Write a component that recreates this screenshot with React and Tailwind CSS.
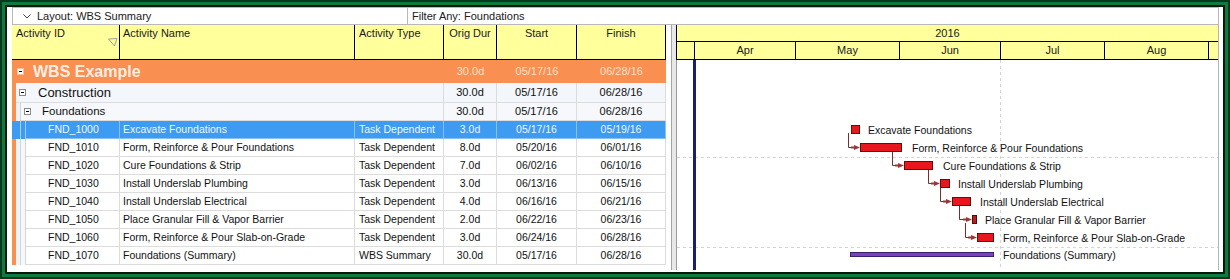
import React from 'react';

const tasks = [
  ['FND_1000', 'Excavate Foundations', 'Task Dependent', '3.0d', '05/17/16', '05/19/16', true],
  ['FND_1010', 'Form, Reinforce & Pour Foundations', 'Task Dependent', '8.0d', '05/20/16', '06/01/16'],
  ['FND_1020', 'Cure Foundations & Strip', 'Task Dependent', '7.0d', '06/02/16', '06/10/16'],
  ['FND_1030', 'Install Underslab Plumbing', 'Task Dependent', '3.0d', '06/13/16', '06/15/16'],
  ['FND_1040', 'Install Underslab Electrical', 'Task Dependent', '4.0d', '06/16/16', '06/21/16'],
  ['FND_1050', 'Place Granular Fill & Vapor Barrier', 'Task Dependent', '2.0d', '06/22/16', '06/23/16'],
  ['FND_1060', 'Form, Reinforce & Pour Slab-on-Grade', 'Task Dependent', '3.0d', '06/24/16', '06/28/16'],
  ['FND_1070', 'Foundations (Summary)', 'WBS Summary', '30.0d', '05/17/16', '06/28/16'],
];

const bars = [
  { x1: 851, x2: 859, y: 125, lx: 868, label: 'Excavate Foundations' },
  { x1: 860, x2: 901, y: 143, lx: 912, label: 'Form, Reinforce & Pour Foundations' },
  { x1: 904, x2: 932, y: 161, lx: 943, label: 'Cure Foundations & Strip' },
  { x1: 940, x2: 949, y: 179, lx: 958, label: 'Install Underslab Plumbing' },
  { x1: 952, x2: 970, y: 197, lx: 980, label: 'Install Underslab Electrical' },
  { x1: 972, x2: 976, y: 215, lx: 985, label: 'Place Granular Fill & Vapor Barrier', dark: true },
  { x1: 977, x2: 993, y: 233, lx: 1003, label: 'Form, Reinforce & Pour Slab-on-Grade' },
];

const links = [
  { vx: 848, y1: 133, y2: 147, x2: 860 },
  { vx: 892, y1: 151, y2: 165, x2: 904 },
  { vx: 928, y1: 169, y2: 183, x2: 940 },
  { vx: 940, y1: 187, y2: 201, x2: 952 },
  { vx: 959, y1: 205, y2: 219, x2: 972 },
  { vx: 965, y1: 223, y2: 237, x2: 977 },
];

function MinusBox({ className = '' }) {
  return (
    <span className={`flex h-[7px] w-[7px] shrink-0 items-center justify-center border border-[#8a8a8a] bg-white ${className}`}>
      <span className="h-px w-[3px] bg-black" />
    </span>
  );
}

function Toolbar() {
  return (
    <div className="flex h-[18px] border border-[#b8b8b8] bg-white text-[11px] text-[#202020]">
      <div className="flex w-[394px] items-center pl-[10px]">
        <svg width="8" height="5" viewBox="0 0 8 5" className="mr-[6px]">
          <polyline points="0.5,0.5 4,4 7.5,0.5" fill="none" stroke="#404040" strokeWidth="1" />
        </svg>
        <span>Layout: WBS Summary</span>
      </div>
      <div className="flex flex-1 items-center border-l border-[#b8b8b8] pl-[4px]">Filter Any: Foundations</div>
    </div>
  );
}

function TableHeader() {
  const c = 'border-r border-black pt-0';
  return (
    <div className="flex h-[35px] border-b border-black bg-[#ffff9b] text-[11px] text-[#1a1a1a]">
      <div className={`relative w-[108px] pl-[4px] ${c}`}>
        Activity ID
        <svg width="10" height="9" viewBox="0 0 10 9" className="absolute left-[96px] top-[13px]">
          <polygon points="0.5,1 9,0.5 6.5,8" fill="none" stroke="#a0a0a0" strokeWidth="1" />
        </svg>
      </div>
      <div className={`w-[235px] pl-[3px] ${c}`}>Activity Name</div>
      <div className={`w-[89px] pl-[4px] ${c}`}>Activity Type</div>
      <div className={`w-[53px] text-center ${c}`}>Orig Dur</div>
      <div className={`w-[80px] text-center ${c}`}>Start</div>
      <div className={`w-[89px] text-center ${c}`}>Finish</div>
    </div>
  );
}

function WbsRow() {
  return (
    <div className="flex h-[23px] bg-[#f98f50] text-[11px] text-[#fde0cb]">
      <div className="flex w-[432px] items-center pl-[5px]">
        <MinusBox className="border-[#f3c1a0]" />
        <span className="ml-[9px] text-[16px] font-bold text-[#fdeee3]">WBS Example</span>
      </div>
      <div className="flex w-[53px] items-center justify-center">30.0d</div>
      <div className="flex w-[80px] items-center justify-center">05/17/16</div>
      <div className="flex w-[89px] items-center justify-center">06/28/16</div>
    </div>
  );
}

function Stripe({ color, line }) {
  return <div className={`h-full w-[5px] border-r ${color} ${line}`} />;
}

function ConstructionRow() {
  const cell = 'flex items-center justify-center border-r border-b border-[#dcdcdc]';
  return (
    <div className="flex h-[20px] text-[11px] text-[#111]">
      <div className="h-full w-[4px] bg-[#f98f50]" />
      <div className="flex w-[428px] items-center border-r border-b border-[#dcdcdc] bg-[#f3f6fa]">
        <MinusBox className="ml-[3px]" />
        <span className="ml-[12px] text-[13px]">Construction</span>
      </div>
      <div className={`w-[53px] bg-[#f3f6fa] ${cell}`}>30.0d</div>
      <div className={`w-[80px] bg-[#f3f6fa] ${cell}`}>05/17/16</div>
      <div className={`w-[89px] bg-[#f3f6fa] ${cell}`}>06/28/16</div>
    </div>
  );
}

function FoundationsRow() {
  const cell = 'flex items-center justify-center border-r border-b border-[#dcdcdc] bg-[#f6f8fb]';
  return (
    <div className="flex h-[18px] text-[11px] text-[#111]">
      <div className="h-full w-[4px] bg-[#f98f50]" />
      <Stripe color="bg-[#eef3f9]" line="border-[#d6d6d6]" />
      <div className="flex w-[423px] items-center border-r border-b border-[#dcdcdc] bg-[#f6f8fb]">
        <MinusBox className="ml-[3px]" />
        <span className="ml-[11px] text-[11.5px]">Foundations</span>
      </div>
      <div className={`w-[53px] ${cell}`}>30.0d</div>
      <div className={`w-[80px] ${cell}`}>05/17/16</div>
      <div className={`w-[89px] ${cell}`}>06/28/16</div>
    </div>
  );
}

function TaskRow({ t }) {
  const [id, name, type, dur, start, finish, sel] = t;
  const line = sel ? 'border-[#86c2f7]' : 'border-[#dcdcdc]';
  const bg = sel ? 'bg-[#3d9bf2] text-[#eef7ff]' : 'bg-white text-[#111]';
  const cell = `flex items-center border-r border-b ${line}`;
  return (
    <div className={`flex h-[18px] text-[10.5px] ${bg}`}>
      <div className={`h-full w-[4px] ${sel ? 'bg-[#3d9bf2]' : 'bg-[#f98f50]'}`} />
      <Stripe color={sel ? 'bg-[#3d9bf2]' : 'bg-[#eef3f9]'} line={sel ? 'border-[#9fd0fa]' : 'border-[#d6d6d6]'} />
      <Stripe color={sel ? 'bg-[#3d9bf2]' : 'bg-[#f4f7fb]'} line={sel ? 'border-[#9fd0fa]' : 'border-[#d6d6d6]'} />
      <div className={`w-[94px] pl-[22px] ${cell}`}>{id}</div>
      <div className={`w-[235px] pl-[3px] ${cell}`}>{name}</div>
      <div className={`w-[89px] pl-[4px] ${cell}`}>{type}</div>
      <div className={`w-[53px] justify-center ${cell}`}>{dur}</div>
      <div className={`w-[80px] justify-center ${cell}`}>{start}</div>
      <div className={`w-[89px] justify-center ${cell}`}>{finish}</div>
    </div>
  );
}

function Table() {
  return (
    <div className="flex w-[654px] flex-col bg-white">
      <TableHeader />
      <WbsRow />
      <ConstructionRow />
      <FoundationsRow />
      {tasks.map((t) => (
        <TaskRow key={t[0]} t={t} />
      ))}
    </div>
  );
}

function Splitter() {
  return (
    <div className="flex w-[10px]">
      <div className="w-[5px] bg-white" />
      <div className="w-px bg-[#a4a4a4]" />
      <div className="w-[4px] bg-[#e8e8e8]" />
    </div>
  );
}

function GanttHeader() {
  const m = 'flex items-center justify-center border-r border-black';
  return (
    <div className="flex flex-col border-l border-black bg-[#ffff9b] text-[11px] text-[#202020]">
      <div className="flex h-[17px] items-center justify-center border-b border-black">2016</div>
      <div className="flex h-[18px] border-b border-black">
        <div className="w-[18px] border-r border-black" />
        <div className={`w-[101px] ${m}`}>Apr</div>
        <div className={`w-[104px] ${m}`}>May</div>
        <div className={`w-[101px] ${m}`}>Jun</div>
        <div className={`w-[104px] ${m}`}>Jul</div>
        <div className={`w-[104px] ${m}`}>Aug</div>
        <div className="flex-1" />
      </div>
    </div>
  );
}

function GanttBody() {
  return (
    <div className="h-[210px] border-l border-[#9a9a9a] bg-white">
      <svg width="541" height="210" viewBox="0 0 541 210" className="block">
        <g transform="translate(-677,-60)" fontFamily="'Liberation Sans', Arial, sans-serif" fontSize="10.5">
          <line x1="677" y1="157.5" x2="1218" y2="157.5" stroke="#d4d4d4" strokeDasharray="3 3" />
          <line x1="677" y1="247.5" x2="1218" y2="247.5" stroke="#d4d4d4" strokeDasharray="3 3" />
          <line x1="1000.5" y1="60" x2="1000.5" y2="270" stroke="#d4d4d4" strokeDasharray="3 3" />
          <rect x="693" y="60" width="3" height="210" fill="#1c1f6e" />
          {links.map((l, i) => (
            <g key={i}>
              <path d={`M${l.vx + 0.5} ${l.y1} V${l.y2 + 0.5} H${l.x2 - 5}`} fill="none" stroke="#7d2b2b" strokeWidth="1" />
              <rect x={l.x2 - 9} y={l.y2 - 0.5} width="4" height="2" fill="#a03535" />
              <polygon points={`${l.x2 - 6},${l.y2 - 2} ${l.x2},${l.y2 + 0.5} ${l.x2 - 6},${l.y2 + 3}`} fill="#a03535" />
            </g>
          ))}
          {bars.map((b) => (
            <g key={b.label}>
              <rect
                x={b.x1 + 0.5}
                y={b.y + 0.5}
                width={b.x2 - b.x1}
                height="8"
                fill={b.dark ? '#b52222' : '#e8171d'}
                stroke={b.dark ? '#4a0f0f' : '#5c1010'}
                strokeWidth="1"
              />
              <text x={b.lx} y={b.y + 4.5} dominantBaseline="central" fill="#111">
                {b.label}
              </text>
            </g>
          ))}
          <rect x="850.5" y="252.5" width="143" height="4" fill="#7a40c2" stroke="#3a2070" strokeWidth="1" />
          <text x="1003" y="255" dominantBaseline="central" fill="#111">
            Foundations (Summary)
          </text>
        </g>
      </svg>
    </div>
  );
}

function Gantt() {
  return (
    <div className="flex w-[543px] flex-col border-r border-[#b4b4b4]">
      <GanttHeader />
      <GanttBody />
    </div>
  );
}

export default function App() {
  return (
    <div className="h-[279px] w-[1230px] border-2 border-[#063a1c] bg-[#0f7a40] p-[3px] font-['Liberation_Sans',Arial,sans-serif]">
      <div className="flex h-full flex-col border-2 border-[#04190c] bg-white pb-[2px] pl-[5px] pr-[4px]">
        <Toolbar />
        <div className="flex h-[245px]">
          <Table />
          <Splitter />
          <Gantt />
        </div>
      </div>
    </div>
  );
}
